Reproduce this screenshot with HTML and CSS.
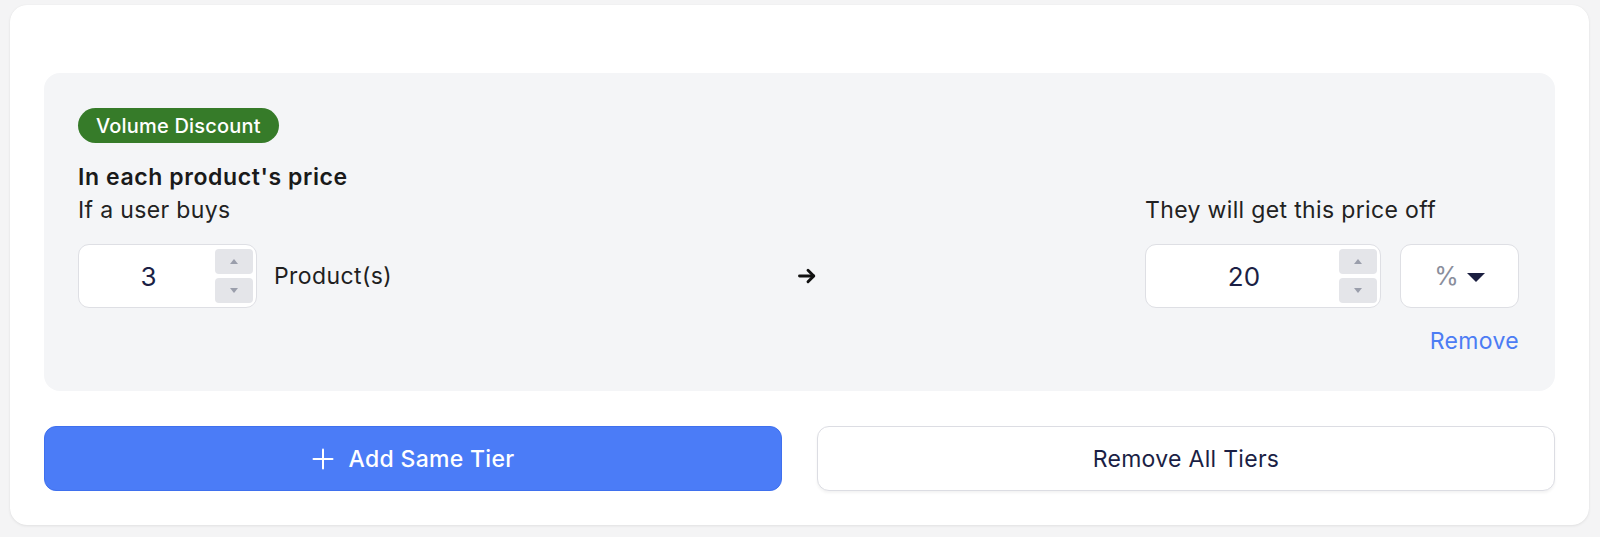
FILE: index.html
```html
<!DOCTYPE html>
<html lang="en">
<head>
<meta charset="utf-8">
<title>Volume Discount</title>
<link rel="stylesheet" href="styles.css">
</head>
<body>
<div class="card">
  <div class="tier">
    <span class="badge">Volume Discount</span>
    <h3 class="tier-title">In each product's price</h3>
    <div class="tier-grid">
      <div class="label label-left">If a user buys</div>
      <div class="label label-right">They will get this price off</div>

      <div class="controls controls-left">
        <div class="num-input num-small">
          <span class="num-value">3</span>
          <div class="spinner">
            <span class="spin-btn"><span class="tri tri-up"></span></span>
            <span class="spin-btn"><span class="tri tri-down"></span></span>
          </div>
        </div>
        <span class="unit">Product(s)</span>
      </div>

      <div class="arrow">
        <svg width="20" height="20" viewBox="0 0 20 20" fill="none" stroke="#111" stroke-width="2.9" stroke-linecap="round" stroke-linejoin="round">
          <path d="M2.5 10H16.5"/>
          <path d="M11 4.2L16.8 10L11 15.8"/>
        </svg>
      </div>

      <div class="controls controls-right">
        <div class="num-input num-wide">
          <span class="num-value">20</span>
          <div class="spinner">
            <span class="spin-btn"><span class="tri tri-up"></span></span>
            <span class="spin-btn"><span class="tri tri-down"></span></span>
          </div>
        </div>
        <div class="select">
          <span class="select-value">%</span>
          <span class="caret"></span>
        </div>
      </div>

      <a class="remove-link">Remove</a>
    </div>
  </div>

  <div class="actions">
    <button class="btn btn-primary">
      <svg class="plus" width="22" height="22" viewBox="0 0 22 22" fill="none" stroke="#fff" stroke-width="2" stroke-linecap="round">
        <path d="M11 1.5V20.5"/>
        <path d="M1.5 11H20.5"/>
      </svg>
      <span>Add Same Tier</span>
    </button>
    <button class="btn btn-secondary">Remove All Tiers</button>
  </div>
</div>
</body>
</html>
```

FILE: styles.css
```css
* { box-sizing: border-box; }

html, body {
  margin: 0;
  padding: 0;
}

body {
  background: #f4f4f5;
  font-family: Inter, "Noto Sans", "Liberation Sans", sans-serif;
  color: #1c1c1e;
  padding: 5px 11px 12px 10px;
}

.card {
  background: #ffffff;
  border-radius: 17px;
  box-shadow: 0 1px 3px rgba(0, 0, 0, 0.08), 0 0 1px rgba(0, 0, 0, 0.06);
  padding: 68px 34px 34px;
  height: 520px;
}

.tier {
  background: #f4f5f7;
  border-radius: 16px;
  padding: 35px 36px 36px 34px;
}

.badge {
  display: inline-flex;
  align-items: center;
  height: 35px;
  padding: 0 18px;
  border-radius: 18px;
  background: #367b29;
  color: #ffffff;
  font-size: 20px;
  letter-spacing: 0.2px;
  font-weight: 500;
}

.tier-title {
  margin: 20px 0 0;
  font-size: 23px;
  line-height: 28px;
  font-weight: 600;
  letter-spacing: 0.6px;
  color: #1a1a1a;
}

.tier-grid {
  display: grid;
  grid-template-columns: 1fr 346px 374px;
  margin-top: 5px;
}

.label {
  font-size: 23px;
  line-height: 28px;
  letter-spacing: 0.35px;
  color: #222;
}

.label-left { grid-column: 1; grid-row: 1; }
.label-right { grid-column: 3; grid-row: 1; }

.controls {
  display: flex;
  align-items: center;
  margin-top: 20px;
  grid-row: 2;
}

.controls-left { grid-column: 1; gap: 17px; }
.controls-right { grid-column: 3; gap: 19px; }

.arrow {
  grid-column: 2;
  grid-row: 2;
  align-self: end;
  height: 64px;
  display: flex;
  align-items: center;
  margin-left: -2px;
}

.arrow svg { display: block; }

.num-input {
  display: flex;
  align-items: center;
  height: 64px;
  background: #ffffff;
  border: 1px solid #dedfe4;
  border-radius: 11px;
  padding: 3px;
}

.num-small { width: 179px; }
.num-wide { width: 236px; }

.num-value {
  flex: 1;
  text-align: center;
  font-size: 26px;
  color: #1b1f45;
}

.spinner {
  display: flex;
  flex-direction: column;
  gap: 4px;
}

.spin-btn {
  width: 38px;
  height: 25px;
  background: #e4e5e9;
  border-radius: 4px;
  display: flex;
  align-items: center;
  justify-content: center;
}

.tri {
  width: 0;
  height: 0;
  border-left: 4.5px solid transparent;
  border-right: 4.5px solid transparent;
}

.tri-up { border-bottom: 5px solid #9a9eab; }
.tri-down { border-top: 5px solid #9a9eab; }

.unit {
  font-size: 23px;
  letter-spacing: 0.4px;
  color: #1f1f1f;
}

.select {
  width: 119px;
  height: 64px;
  background: #ffffff;
  border: 1px solid #dedfe4;
  border-radius: 11px;
  display: flex;
  align-items: center;
  justify-content: center;
  gap: 8px;
}

.select-value {
  font-size: 25px;
  color: #8a8e9c;
}

.caret {
  width: 0;
  height: 0;
  border-left: 9.5px solid transparent;
  border-right: 9.5px solid transparent;
  border-top: 9px solid #1b1f40;
  margin-top: 2px;
}

.remove-link {
  grid-column: 3;
  grid-row: 3;
  justify-self: end;
  margin-top: 19px;
  font-size: 23px;
  line-height: 28px;
  letter-spacing: 0.35px;
  color: #4c7cf4;
  cursor: pointer;
}

.actions {
  display: grid;
  grid-template-columns: 1fr 1fr;
  gap: 35px;
  margin-top: 35px;
}

.btn {
  height: 65px;
  border-radius: 12px;
  font-family: inherit;
  font-size: 23px;
  letter-spacing: 0.3px;
  font-weight: 500;
  display: flex;
  align-items: center;
  justify-content: center;
  cursor: pointer;
}

.btn-primary {
  background: #4b7cf7;
  border: 1px solid #3f70ee;
  color: #ffffff;
  gap: 15px;
}

.plus { display: block; }

.btn-secondary {
  background: #ffffff;
  border: 1px solid #dcdde3;
  color: #1b1f45;
  font-weight: 400;
  box-shadow: 0 2px 3px rgba(0, 0, 0, 0.05);
}
```
